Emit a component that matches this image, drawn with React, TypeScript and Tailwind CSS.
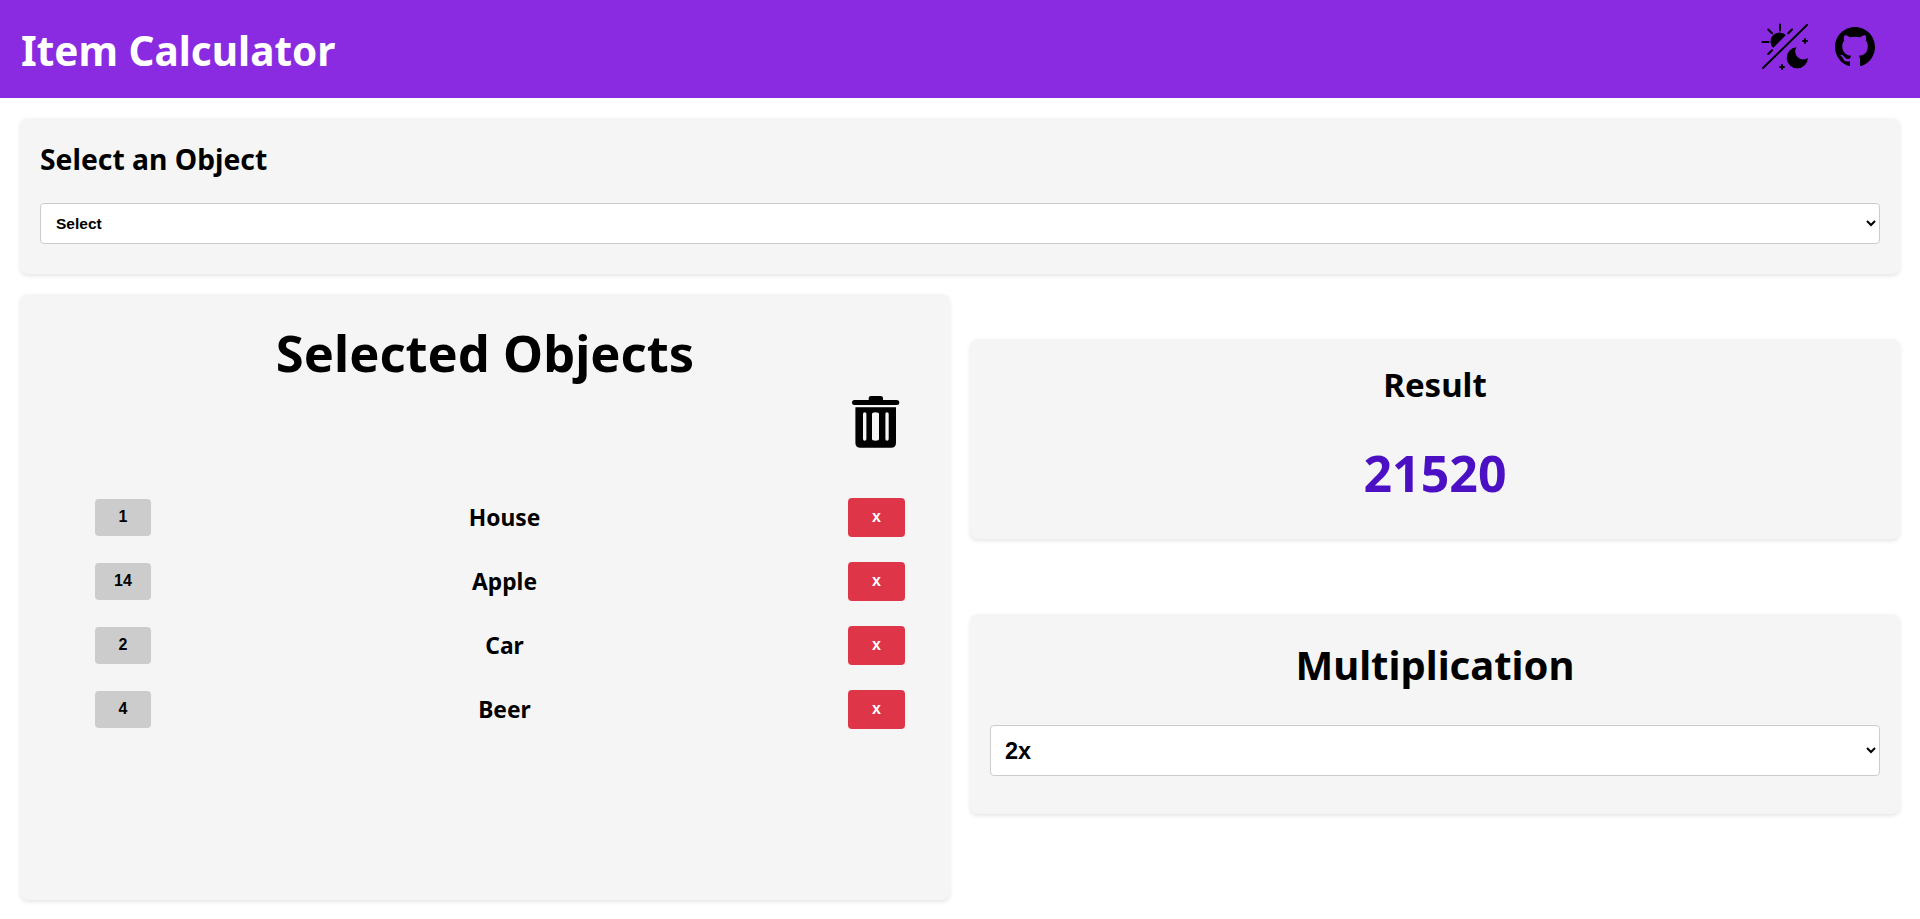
import { BsGithub } from "react-icons/bs";

const headingFont = "font-['Noto_Sans','Open_Sans',sans-serif]";
const controlFont = "font-['Liberation_Sans',Arial,sans-serif]";

const rows = [
  { count: 1, name: "House" },
  { count: 14, name: "Apple" },
  { count: 2, name: "Car" },
  { count: 4, name: "Beer" },
];

function ThemeIcon() {
  return (
    <svg width="48" height="48" viewBox="0 0 48 48" fill="black" stroke="black" strokeLinecap="round">
      <path d="M3 45 47 2" strokeWidth="1.9" fill="none" />
      <path d="M13.1 24.9A9 9 0 0 1 25.9 12.1Z" stroke="none" />
      <path d="M2.5 19H8.5M20 1.5V7.5M8.3 6.5 12 10.2M32 6.5 28.3 10.2M8.3 31 12 27.3" strokeWidth="2" fill="none" />
      <path d="M36.5 24.2A10.6 10.6 0 1 0 47.9 35 8 8 0 0 1 36.5 24.2Z" stroke="none" />
      <path d="M45 15.3V20.7M42.3 18H47.7M22 41.3V46.7M19.3 44H24.7" strokeWidth="1.9" fill="none" strokeLinecap="butt" />
    </svg>
  );
}

function TrashIcon() {
  return (
    <svg width="51" height="58" viewBox="0 0 51 58" className="block">
      <path d="M3 9.5Q3 7 5.5 7H19.7V5Q19.7 3 22 3H31.7Q34 3 34 5V7H48Q50.4 7 50.4 9.5T48 12H5.5Q3 12 3 9.5Z" fill="black" />
      <path
        fillRule="evenodd"
        d="M6.4 14.3H47V49.7Q47 54.7 42 54.7H11.4Q6.4 54.7 6.4 49.7ZM14 21V46Q14 47.7 15.7 47.7T17.4 46V21Q17.4 19.3 15.7 19.3T14 21ZM23 21V46Q23 47.7 26.5 47.7T30 46V21Q30 19.3 26.5 19.3T23 21ZM36.4 21V46Q36.4 47.7 38 47.7T39.7 46V21Q39.7 19.3 38 19.3T36.4 21Z"
        fill="black"
      />
    </svg>
  );
}

function Row({ count, name }: { count: number; name: string }) {
  return (
    <div className="flex h-[64px] items-center justify-between">
      <div className={`flex h-[37px] w-[56px] items-center justify-center rounded-[4px] bg-[#cccccc] pb-[1px] text-[16px] font-bold text-black ${controlFont}`}>
        {count}
      </div>
      <span className={`ml-[10px] flex-1 pt-[2px] text-center text-[22.8px] font-bold text-black ${headingFont}`}>{name}</span>
      <button type="button" className={`h-[39px] w-[57px] rounded-[4px] bg-[#df3549] text-[16px] font-bold text-white ${controlFont}`}>
        x
      </button>
    </div>
  );
}

export default function App() {
  return (
    <div className={`min-h-[919px] bg-white ${headingFont}`}>
      <header className="flex h-[98px] items-center justify-between bg-[#8a2be2] pl-[21px] pr-[45px]">
        <h1 className="pt-[5px] text-[40.5px] font-bold text-white">Item Calculator</h1>
        <div className="flex items-center gap-[27px] pb-[4px]">
          <ThemeIcon />
          <BsGithub className="text-[40px] text-black" />
        </div>
      </header>

      <main className="px-[20px] pt-[20px]">
        <section className="h-[156px] rounded-[8px] bg-[#f5f5f5] px-[20px] pt-[19px] shadow-[0_2px_4px_rgba(0,0,0,0.1)]">
          <h2 className="text-[28.3px] font-bold leading-[44px] text-black">Select an Object</h2>
          <select className={`mt-[22px] h-[41px] w-full rounded-[4px] border border-[#cccccc] bg-white px-[11px] text-[15.5px] font-bold text-black ${controlFont}`}>
            <option>Select</option>
          </select>
        </section>

        <div className="mt-[20px] grid grid-cols-2 gap-[20px]">
          <section className="h-[606px] rounded-[8px] bg-[#f5f5f5] pl-[75px] pr-[45px] pt-[24px] shadow-[0_2px_4px_rgba(0,0,0,0.1)]">
            <h2 className="-ml-[30px] text-center text-[50.7px] font-bold leading-[70px] text-black">Selected Objects</h2>
            <div className="mt-[5px] flex justify-end pr-[5px]">
              <TrashIcon />
            </div>
            <div className="mt-[34px]">
              {rows.map((row) => (
                <Row key={row.name} count={row.count} name={row.name} />
              ))}
            </div>
          </section>

          <div className="flex flex-col pt-[45px]">
            <section className="flex h-[200px] flex-col items-center rounded-[8px] bg-[#f5f5f5] pt-[24px] shadow-[0_2px_4px_rgba(0,0,0,0.1)]">
              <h2 className="text-[33px] font-bold leading-[44px] text-black">Result</h2>
              <p className="mt-[32px] text-[50px] font-bold leading-[68px] text-[#4b0fc4]">21520</p>
            </section>
            <section className="mt-[75px] h-[200px] rounded-[8px] bg-[#f5f5f5] px-[20px] pt-[24px] shadow-[0_2px_4px_rgba(0,0,0,0.1)]">
              <h2 className="text-center text-[40px] font-bold leading-[54px] text-black">Multiplication</h2>
              <select className={`mt-[33px] h-[51px] w-full rounded-[4px] border border-[#cccccc] bg-white px-[10px] text-[23.5px] font-bold text-black ${controlFont}`}>
                <option>2x</option>
              </select>
            </section>
          </div>
        </div>
      </main>
    </div>
  );
}
